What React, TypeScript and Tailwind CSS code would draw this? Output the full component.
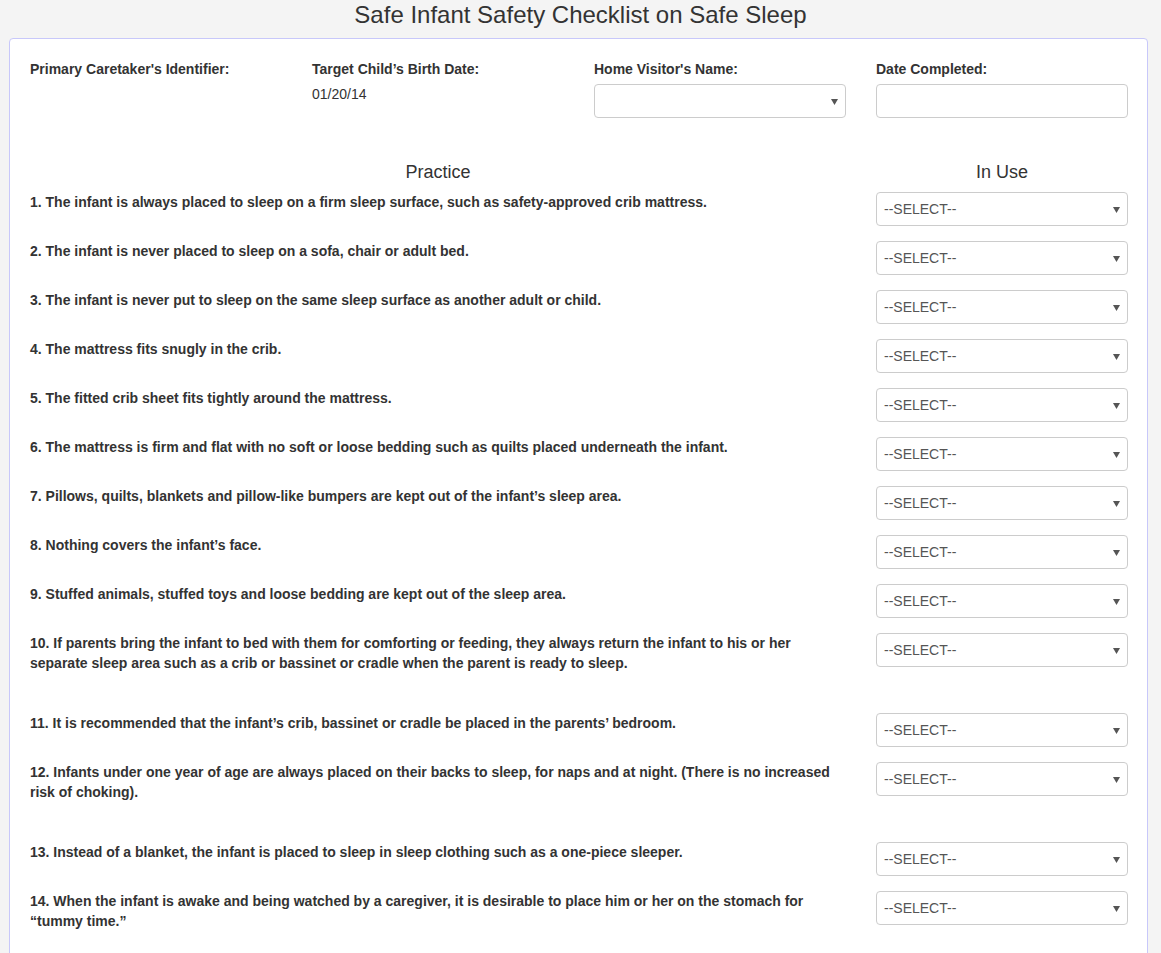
import React from 'react';

const practices: { text: string; tall?: boolean }[] = [
  { text: '1. The infant is always placed to sleep on a firm sleep surface, such as safety-approved crib mattress.' },
  { text: '2. The infant is never placed to sleep on a sofa, chair or adult bed.' },
  { text: '3. The infant is never put to sleep on the same sleep surface as another adult or child.' },
  { text: '4. The mattress fits snugly in the crib.' },
  { text: '5. The fitted crib sheet fits tightly around the mattress.' },
  { text: '6. The mattress is firm and flat with no soft or loose bedding such as quilts placed underneath the infant.' },
  { text: '7. Pillows, quilts, blankets and pillow-like bumpers are kept out of the infant\u2019s sleep area.' },
  { text: '8. Nothing covers the infant\u2019s face.' },
  { text: '9. Stuffed animals, stuffed toys and loose bedding are kept out of the sleep area.' },
  {
    text: '10. If parents bring the infant to bed with them for comforting or feeding, they always return the infant to his or her separate sleep area such as a crib or bassinet or cradle when the parent is ready to sleep.',
    tall: true,
  },
  { text: '11. It is recommended that the infant\u2019s crib, bassinet or cradle be placed in the parents\u2019 bedroom.' },
  {
    text: '12. Infants under one year of age are always placed on their backs to sleep, for naps and at night. (There is no increased risk of choking).',
    tall: true,
  },
  { text: '13. Instead of a blanket, the infant is placed to sleep in sleep clothing such as a one-piece sleeper.' },
  {
    text: '14. When the infant is awake and being watched by a caregiver, it is desirable to place him or her on the stomach for \u201ctummy time.\u201d',
    tall: true,
  },
];

function FakeSelect({ value }: { value?: string }) {
  return (
    <div className="flex h-[34px] w-[252px] items-center justify-between rounded-[4px] border border-[#cccccc] bg-white pl-[7px] pr-[7px] text-[14px] text-[#555555]">
      <span>{value}</span>
      <svg width="7" height="6" viewBox="0 0 7 6" className="mt-[1px]">
        <path d="M0 0h7L3.5 6z" fill="#555555" />
      </svg>
    </div>
  );
}

export default function App() {
  return (
    <div className="min-h-screen bg-[#f4f4f4] pb-8 font-['Liberation_Sans',Arial,sans-serif] text-[#333333]">
      <h1 className="pt-[2px] pb-[10px] text-center text-[24px] leading-[26px]">
        Safe Infant Safety Checklist on Safe Sleep
      </h1>
      <div className="ml-[9px] mr-[13px] rounded-[4px] border border-[#c8c8fa] bg-white pl-[20px] pr-[19px] pt-[20px] pb-6">
        <div className="grid grid-cols-[252px_252px_252px_252px] gap-x-[30px] text-[14px] leading-[20px]">
          <div>
            <div className="mb-[5px] font-bold">Primary Caretaker's Identifier:</div>
          </div>
          <div>
            <div className="mb-[5px] font-bold">Target Child’s Birth Date:</div>
            <div>01/20/14</div>
          </div>
          <div>
            <div className="mb-[5px] font-bold">Home Visitor's Name:</div>
            <FakeSelect />
          </div>
          <div>
            <div className="mb-[5px] font-bold">Date Completed:</div>
            <div className="h-[34px] w-[252px] rounded-[4px] border border-[#cccccc] bg-white" />
          </div>
        </div>

        <div className="mt-[44px] flex text-[18px] leading-[20px]">
          <div className="w-[816px] shrink-0 text-center">Practice</div>
          <div className="ml-[30px] w-[252px] shrink-0 text-center">In Use</div>
        </div>

        <div className="mt-[9px]">
          {practices.map((p) => (
            <div
              key={p.text}
              className={p.tall ? 'flex h-[80px] items-start' : 'flex h-[49px] items-start'}
            >
              <div className="w-[816px] shrink-0 pt-[1px] text-[14px] font-bold leading-[20px]">{p.text}</div>
              <div className="ml-[30px] shrink-0 pt-[1px]">
                <FakeSelect value="--SELECT--" />
              </div>
            </div>
          ))}
        </div>
      </div>
    </div>
  );
}
